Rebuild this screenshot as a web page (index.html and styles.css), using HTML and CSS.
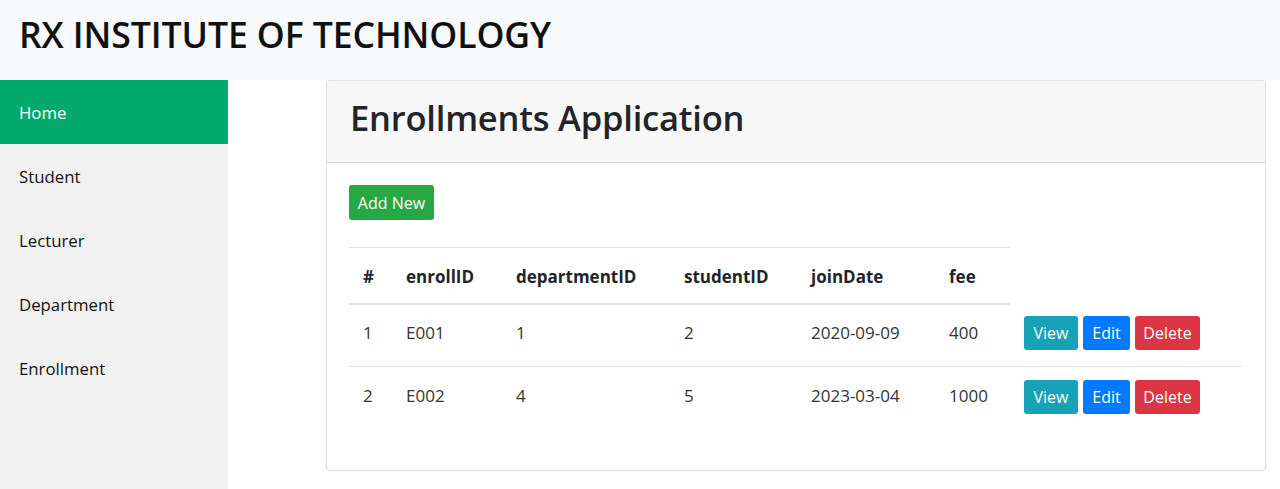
FILE: index.html
```html
<!DOCTYPE html>
<html lang="en">
<head>
<meta charset="utf-8">
<title>RX Institute of Technology</title>
<link rel="stylesheet" href="styles.css">
</head>
<body>
<header class="topbar">
  <h1 class="brand">RX INSTITUTE OF TECHNOLOGY</h1>
</header>
<div class="layout">
  <nav class="sidebar">
    <a class="nav-link active" href="#">Home</a>
    <a class="nav-link" href="#">Student</a>
    <a class="nav-link" href="#">Lecturer</a>
    <a class="nav-link" href="#">Department</a>
    <a class="nav-link" href="#">Enrollment</a>
  </nav>
  <main class="content">
    <section class="card">
      <div class="card-header">
        <h2 class="card-title">Enrollments Application</h2>
      </div>
      <div class="card-body">
        <div class="toolbar">
          <a class="btn btn-success" href="#">Add New</a>
        </div>
        <table class="table">
          <colgroup>
            <col class="c-num">
            <col class="c-enroll">
            <col class="c-dept">
            <col class="c-student">
            <col class="c-date">
            <col class="c-fee">
            <col class="c-actions">
          </colgroup>
          <thead>
            <tr>
              <th>#</th>
              <th>enrollID</th>
              <th>departmentID</th>
              <th>studentID</th>
              <th>joinDate</th>
              <th>fee</th>
            </tr>
          </thead>
          <tbody>
            <tr>
              <td>1</td>
              <td>E001</td>
              <td>1</td>
              <td>2</td>
              <td>2020-09-09</td>
              <td>400</td>
              <td class="actions"><a class="btn btn-sm btn-info" href="#">View</a><a class="btn btn-sm btn-primary" href="#">Edit</a><a class="btn btn-sm btn-danger" href="#">Delete</a></td>
            </tr>
            <tr>
              <td>2</td>
              <td>E002</td>
              <td>4</td>
              <td>5</td>
              <td>2023-03-04</td>
              <td>1000</td>
              <td class="actions"><a class="btn btn-sm btn-info" href="#">View</a><a class="btn btn-sm btn-primary" href="#">Edit</a><a class="btn btn-sm btn-danger" href="#">Delete</a></td>
            </tr>
          </tbody>
        </table>
      </div>
    </section>
  </main>
</div>
</body>
</html>
```
FILE: styles.css
```css
* { box-sizing: border-box; }

html, body {
  margin: 0;
  padding: 0;
}

body {
  font-family: "Open Sans", "Noto Sans", "Liberation Sans", sans-serif;
  font-size: 16px;
  color: #212529;
  background: #ffffff;
  height: 489px;
  overflow: hidden;
  display: flex;
  flex-direction: column;
}

.topbar {
  background: #f8f9fa;
  height: 80px;
  padding: 17px 19px 0;
  flex: none;
}

.brand {
  margin: 0;
  font-size: 35.6px;
  font-weight: 600;
  line-height: 1;
  color: #111;
  letter-spacing: -0.1px;
}

.layout {
  display: flex;
  flex: 1;
  min-height: 0;
}

.sidebar {
  width: 228px;
  flex: none;
  background: #f1f1f1;
  display: flex;
  flex-direction: column;
}

.nav-link {
  display: flex;
  align-items: center;
  height: 64px;
  padding: 0 19px;
  color: #111;
  text-decoration: none;
  font-size: 16.8px;
}

.nav-link.active {
  background: #04aa6d;
  color: #ffffff;
}

.content {
  flex: 1;
  padding: 0 14px 0 98px;
}

.card {
  border: 1px solid rgba(0, 0, 0, 0.125);
  border-radius: 4px;
  background: #fff;
  overflow: hidden;
}

.card-header {
  background: #f7f7f7;
  border-bottom: 1px solid rgba(0, 0, 0, 0.125);
  height: 82px;
  padding: 0 23px 6px;
  display: flex;
  align-items: center;
}

.card-title {
  margin: 0;
  font-size: 34.5px;
  font-weight: 600;
  line-height: 1;
  color: #212529;
  letter-spacing: -0.2px;
}

.card-body {
  padding: 22px 23px 0 22px;
}

.toolbar {
  margin-bottom: 27px;
}

.btn {
  display: inline-flex;
  align-items: center;
  justify-content: center;
  border-radius: 3px;
  color: #fff;
  text-decoration: none;
  font-size: 16px;
  line-height: 1;
}

.btn-success {
  background: #28a745;
  height: 35px;
  width: 85px;
}

.btn-sm {
  height: 34px;
  margin-right: 5px;
}

.btn-info { background: #17a2b8; width: 54px; }
.btn-primary { background: #007bff; width: 47px; }
.btn-danger { background: #dc3545; width: 65px; }

.table {
  width: 893px;
  border-collapse: collapse;
  table-layout: fixed;
  margin-bottom: 40px;
  font-size: 17px;
}

.c-num { width: 43px; }
.c-enroll { width: 110px; }
.c-dept { width: 168px; }
.c-student { width: 127px; }
.c-date { width: 138px; }
.c-fee { width: 75px; }
.c-actions { width: 232px; }

.table th,
.table td {
  text-align: left;
  padding: 0 14px;
  vertical-align: middle;
}

.table th {
  height: 56px;
  font-weight: 700;
  border-top: 1px solid #dee2e6;
  border-bottom: 2px solid #dee2e6;
  padding-top: 3px;
  color: #212529;
}

.table td {
  height: 63px;
  border-top: 1px solid #dee2e6;
  color: #333;
  padding-bottom: 5px;
}

.table tbody tr:first-child td { border-top: 0; }

.table td.actions {
  padding-bottom: 3px;
  white-space: nowrap;
}
```
